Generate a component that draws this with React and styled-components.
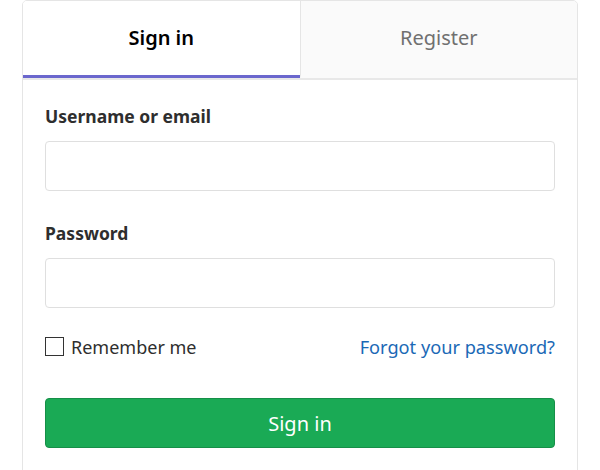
import { useState } from 'react';
import styled, { createGlobalStyle } from 'styled-components';

const GlobalStyle = createGlobalStyle`
  html, body {
    margin: 0;
    padding: 0;
    background: #fff;
  }
  body {
    font-family: 'Noto Sans', 'Open Sans', Arial, sans-serif;
    color: #2e2e2e;
  }
  * {
    box-sizing: border-box;
  }
`;

const Page = styled.div`
  padding: 0 22px 0 22px;
  height: 470px;
  overflow: hidden;
`;

const Card = styled.div`
  width: 556px;
  min-height: 480px;
  border: 1px solid #e5e5e5;
  border-radius: 5px 5px 0 0;
  background: #fff;
`;

const TabList = styled.div`
  display: flex;
  border-bottom: 2px solid #e8e8e8;
`;

const Tab = styled.button`
  flex: 1;
  height: 77px;
  margin: 0;
  padding: 0 0 2px 0;
  border: none;
  border-bottom: 3px solid ${(props) => (props.$active ? '#6b67cd' : 'transparent')};
  border-left: ${(props) => (props.$first ? 'none' : '1px solid #e5e5e5')};
  background: ${(props) => (props.$active ? '#fff' : '#fafafa')};
  color: ${(props) => (props.$active ? '#000' : '#707070')};
  font-family: inherit;
  font-size: 20px;
  font-weight: ${(props) => (props.$active ? 600 : 400)};
  display: flex;
  align-items: center;
  justify-content: center;
  cursor: pointer;

  &:first-child {
    border-top-left-radius: 4px;
  }
  &:last-child {
    border-top-right-radius: 4px;
  }
`;

const Form = styled.form`
  padding: 24px 22px 0 22px;
  display: flex;
  flex-direction: column;
`;

const Field = styled.div`
  display: flex;
  flex-direction: column;
  margin-bottom: ${(props) => props.$gap || 30}px;
`;

const Label = styled.label`
  font-size: 17.5px;
  line-height: 24px;
  font-weight: 700;
  color: #2e2e2e;
  margin-bottom: 13px;
`;

const Input = styled.input`
  height: 50px;
  width: 100%;
  border: 1px solid #dfdfdf;
  border-radius: 4px;
  padding: 0 12px;
  font-family: inherit;
  font-size: 18px;
  outline: none;

  &:focus {
    border-color: #73afea;
  }
`;

const Row = styled.div`
  display: flex;
  align-items: center;
  justify-content: space-between;
  height: 24px;
  margin-bottom: 39px;
`;

const Check = styled.label`
  display: flex;
  align-items: center;
  gap: 7px;
  font-size: 18px;
  line-height: 24px;
  color: #2e2e2e;
  cursor: pointer;

  input {
    appearance: none;
    width: 19px;
    height: 19px;
    margin: 0;
    border: 1px solid #333;
    background: #fff;
    position: relative;
    top: -1px;
  }

  input:checked {
    background: #1b69b6;
    border-color: #1b69b6;
  }
`;

const Link = styled.a`
  font-size: 18.2px;
  line-height: 24px;
  color: #1b69b6;
  text-decoration: none;

  &:hover {
    text-decoration: underline;
  }
`;

const Submit = styled.button`
  height: 50px;
  width: 100%;
  background: #1aaa55;
  border: 1px solid #168f48;
  border-radius: 4px;
  color: #fff;
  font-family: inherit;
  font-size: 20px;
  cursor: pointer;

  &:hover {
    background: #168f48;
  }
`;

export default function App() {
  const [tab, setTab] = useState('signin');
  const [remember, setRemember] = useState(false);

  return (
    <>
      <GlobalStyle />
      <Page>
        <Card>
          <TabList>
            <Tab $first $active={tab === 'signin'} onClick={() => setTab('signin')}>
              Sign in
            </Tab>
            <Tab $active={tab === 'register'} onClick={() => setTab('register')}>
              Register
            </Tab>
          </TabList>
          <Form onSubmit={(e) => e.preventDefault()}>
            <Field>
              <Label htmlFor="login">Username or email</Label>
              <Input id="login" type="text" />
            </Field>
            <Field $gap={27}>
              <Label htmlFor="password">Password</Label>
              <Input id="password" type="password" />
            </Field>
            <Row>
              <Check>
                <input
                  type="checkbox"
                  checked={remember}
                  onChange={(e) => setRemember(e.target.checked)}
                />
                Remember me
              </Check>
              <Link href="#">Forgot your password?</Link>
            </Row>
            <Submit type="submit">Sign in</Submit>
          </Form>
        </Card>
      </Page>
    </>
  );
}
